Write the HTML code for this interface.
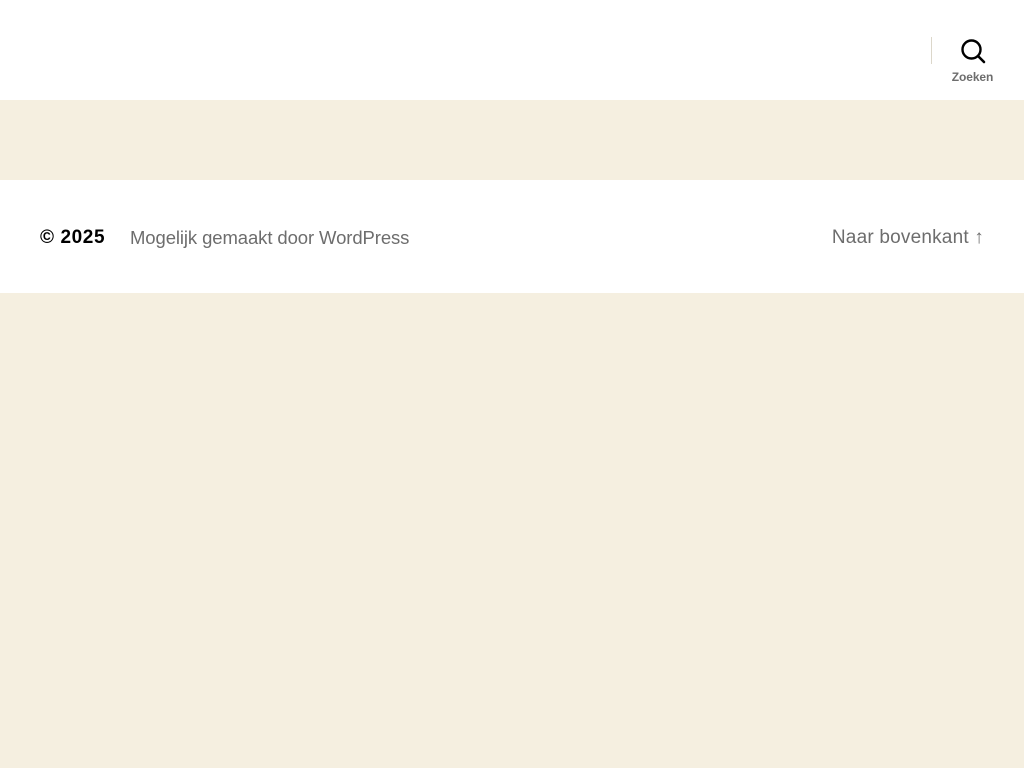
<!DOCTYPE html>
<html><head><meta charset="utf-8"><style>
*{margin:0;padding:0;box-sizing:border-box}
body{width:1024px;height:768px;background:#f5efe0;font-family:"Liberation Sans",sans-serif;overflow:hidden;position:relative}
.header{position:absolute;left:0;top:0;width:1024px;height:100px;background:#fff}
.sep{position:absolute;left:931px;top:37px;width:1px;height:27px;background:#dcd7ca}
.icon{position:absolute;left:960px;top:38px}
.lbl{position:absolute;left:940px;top:70px;width:65px;text-align:center;font-size:12px;font-weight:bold;color:#6d6d6d;letter-spacing:-0.1px}
.footer{position:absolute;left:0;top:180px;width:1024px;height:113px;background:#fff}
.copy{position:absolute;left:40px;top:227px;font-size:19px;font-weight:bold;color:#000;letter-spacing:0.6px}
.pow{position:absolute;left:130px;top:227px;font-size:18.5px;color:#6d6d6d;letter-spacing:-0.1px}
.top{position:absolute;right:40px;top:227px;font-size:19px;color:#6d6d6d;letter-spacing:0.2px}
</style></head><body>
<div class="header"></div>
<div class="sep"></div>
<svg class="icon" width="26" height="26" viewBox="0 0 26 26"><circle cx="11.5" cy="11.5" r="9" fill="none" stroke="#000" stroke-width="2.4"/><line x1="18" y1="18" x2="24" y2="24" stroke="#000" stroke-width="2.6" stroke-linecap="round"/></svg>
<div class="lbl">Zoeken</div>
<div class="footer"></div>
<div class="copy">© 2025</div>
<div class="pow">Mogelijk gemaakt door WordPress</div>
<div class="top">Naar bovenkant ↑</div>
</body></html>
